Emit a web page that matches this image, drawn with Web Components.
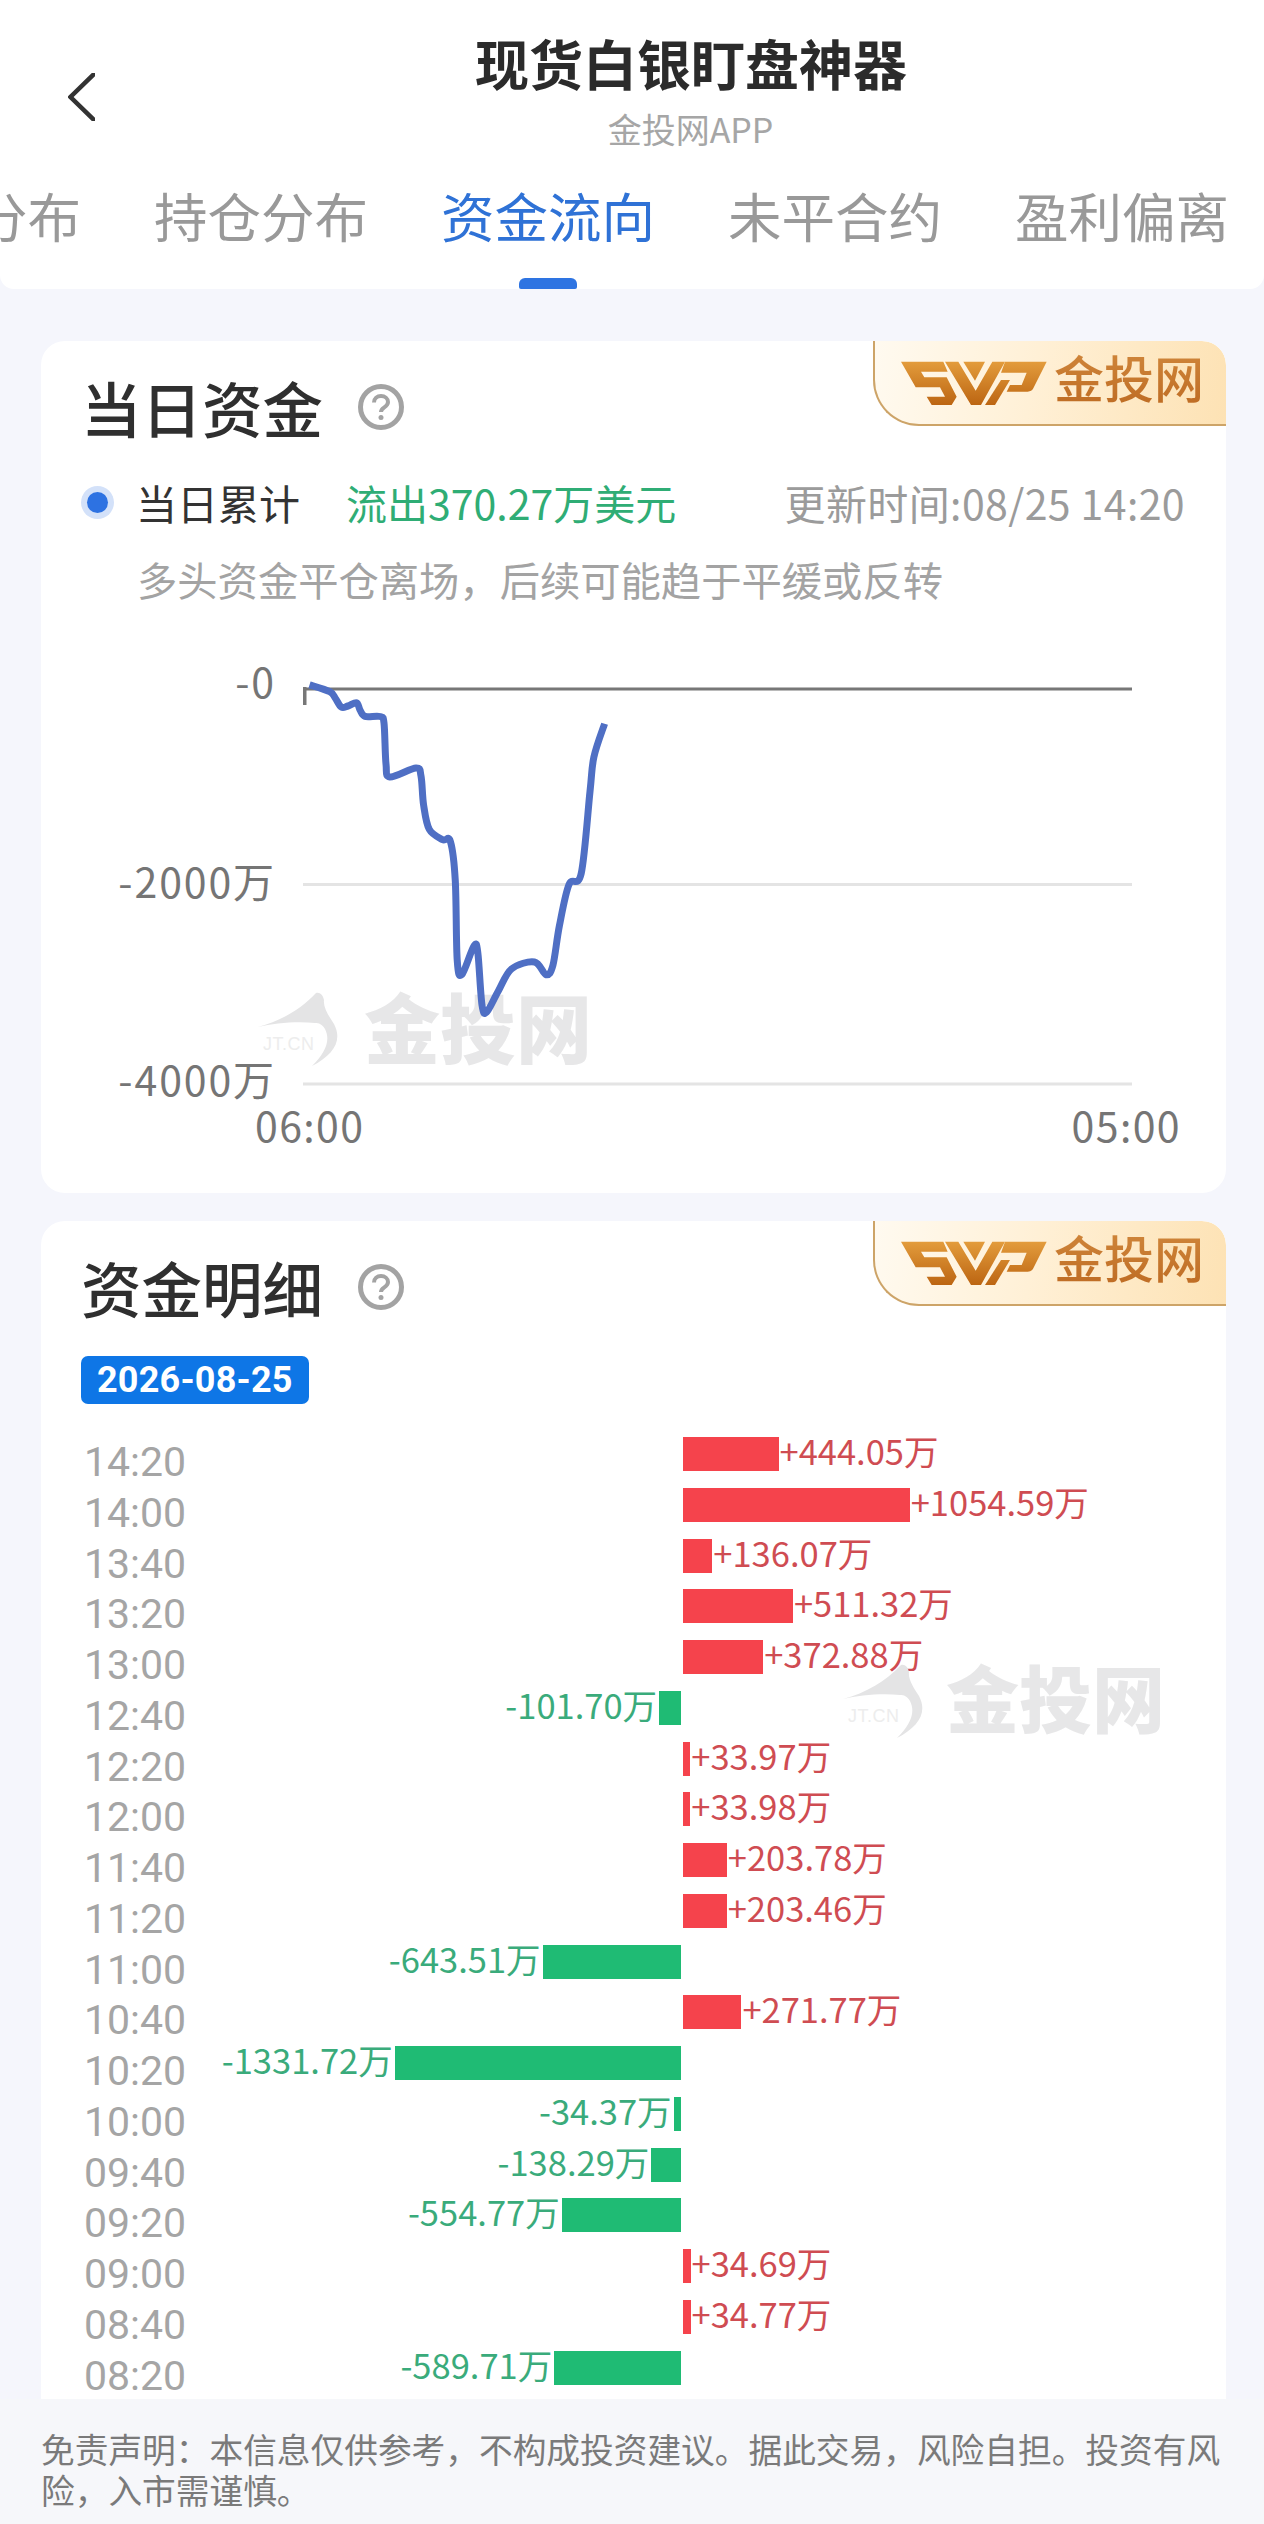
<!DOCTYPE html>
<html lang="zh-CN"><head><meta charset="utf-8"><title>现货白银盯盘神器</title>
<style>
html,body{margin:0;padding:0;background:#f5f6fc;}
body{font-family:"Noto Sans CJK SC","Noto Sans",sans-serif;width:1264px;}
</style></head><body>
<jt-app></jt-app>
<script>
const FONT='font-family:"Noto Sans CJK SC","Noto Sans",sans-serif;';
function def(name,html,setup){
  customElements.define(name,class extends HTMLElement{
    constructor(){super();const r=this.attachShadow({mode:'open'});r.innerHTML=typeof html==='function'?html(this):html;}
    connectedCallback(){if(setup&&!this._s){this._s=1;setup(this,this.shadowRoot);}}
  });
}
def('jt-header',`<style>
:host{display:block;background:#fff;height:289px;border-radius:0 0 14px 14px;overflow:hidden;${FONT}}
.top{display:flex;padding:31px 0 0 68px;height:118px;box-sizing:content-box}
svg{display:block;margin-top:42px;flex:none}
.tt{margin-left:380px;width:431px;text-align:center}
h1{margin:0;font-size:54px;line-height:64px;font-weight:700;color:#2b2b2b;white-space:nowrap}
p{margin:14px 0 0;font-size:34px;line-height:40px;color:#a6a6a6;white-space:nowrap}
nav{display:block}
</style><div class="top"><svg width="27" height="48" viewBox="0 0 27 48"><path d="M25.500 1.500 2.500 24 25.500 46.500" fill="none" stroke="#333" stroke-width="4.500" stroke-linecap="round" stroke-linejoin="miter"/></svg>
<div class="tt"><h1>现货白银盯盘神器</h1><p>金投网APP</p></div></div>
<nav><slot></slot></nav>`);
def('jt-tabs',`<style>:host{display:flex;gap:73px;margin:31px 0 0 -26px;white-space:nowrap}</style><slot></slot>`);
def('jt-tab',`<style>
:host{display:flex;flex-direction:column;align-items:center;flex:none;font-size:53.500px;line-height:70px;color:#999}
:host([active]){color:#2f72d6}
i{display:block;width:58px;height:11px;margin-top:28px;border-radius:6px 6px 2px 2px;background:transparent}
:host([active]) i{background:#2e74e2}
</style><span><slot></slot></span><i></i>`);
def('jt-badge',`<style>
:host{position:absolute;top:0;right:0;width:353px;height:85px;box-sizing:border-box;border-left:2px solid #cda468;border-bottom:2px solid #cda468;border-radius:0 24px 0 46px;background:linear-gradient(100deg,#fffaf0 0%,#fff0d6 45%,#fde2b4 100%);display:flex;align-items:flex-start;${FONT}overflow:hidden}
svg{display:block;margin:9px 0 0 20px;flex:none}
span{margin:0 0 0 -6px;font-size:50px;line-height:70px;font-weight:500;white-space:nowrap;background:linear-gradient(#d28a3e,#bd6a22);-webkit-background-clip:text;background-clip:text;color:transparent}
</style><svg width="165" height="65" viewBox="0 0 495 195">
<defs><linearGradient id="g" x1="0" y1="35" x2="0" y2="165" gradientUnits="userSpaceOnUse"><stop offset="0" stop-color="#e39c3c"/><stop offset="1" stop-color="#bc6512"/></linearGradient></defs>
<g fill="url(#g)">
<path d="M18 35H145L158 65H78L88 82H155L185 140L170 165H110L95 140H150L135 112H62Z"/>
<path d="M150 35H190L242 122L292 35H330L258 165H228Z"/>
<path d="M205 35H270L240 92Z"/>
<path d="M330 35H455L415 115Q410 125 398 125H335L345 105H380L395 68H318Z"/>
<path d="M318 90H345L300 165H270Z"/>
</g></svg><span>金投网</span>`);
def('jt-help',`<style>:host{display:block;width:46px;height:46px;flex:none}svg{display:block}</style>
<svg width="46" height="46" viewBox="0 0 46 46"><circle cx="23" cy="23" r="20.500" fill="none" stroke="#a3a3a3" stroke-width="5"/>
<path d="M16 18.500c0-4 3.200-6.500 7-6.500s7 2.500 7 6c0 3-2 4.300-4 5.600-1.800 1.200-3 2-3 4.400" fill="none" stroke="#a3a3a3" stroke-width="4"/><circle cx="23" cy="33.500" r="2.500" fill="#a3a3a3"/></svg>`);
def('jt-card',`<style>
:host{display:block;position:relative;background:#fff;margin:0 38px 0 41px;border-radius:24px;overflow:hidden;${FONT}}
:host([flat]){border-radius:24px 24px 0 0}
header{display:flex;align-items:center;padding:31px 0 3px 40px;height:70px;gap:35px}
h2{margin:0;font-size:60.500px;line-height:70px;font-weight:500;color:#2f2f2f;white-space:nowrap}
</style><jt-badge></jt-badge><header><h2></h2><jt-help></jt-help></header><slot></slot>`,
(el,r)=>{r.querySelector('h2').textContent=el.getAttribute('heading');});
def('jt-watermark',`<style>
:host{position:absolute;display:flex;align-items:flex-start;gap:var(--gap,24px);${FONT}pointer-events:none}
.b{position:relative;width:84px;height:80px;flex:none}
svg{display:block}
.j{position:absolute;left:6px;top:43px;font:18px/20px "Liberation Sans",sans-serif;letter-spacing:.5px;color:#ededed;white-space:nowrap}
.t{font-size:var(--fs,73px);line-height:var(--fs,73px);font-weight:900;margin-top:-4px;color:#e7e7e8;white-space:nowrap}
</style><div class="b"><svg width="84" height="80" viewBox="0 0 84 80"><path d="M1 36C24 30 44 18 59 2C63 1 66 4 67 9C66 17 72 25 77 33C86 50 76 64 55 75C68 62 74 50 68 38C65 33 62 32 58 32C40 30 18 32 1 36Z" fill="#e4e4e5"/></svg><span class="j">JT.CN</span></div><div class="t">金投网</div>`);
def('jt-legend',`<style>
:host{display:block;padding:18px 41px 0 40px;${FONT}}
.r{display:flex;align-items:center;height:78px;font-size:41px;white-space:nowrap}
.d{width:33px;height:33px;border-radius:50%;background:#d3e1f9;display:flex;align-items:center;justify-content:center;flex:none}
.d i{display:block;width:21px;height:21px;border-radius:50%;background:#2d72e2}
.l{margin-left:22px;color:#333}
.v{margin-left:46px;color:#2fad75}
.u{margin-left:auto;color:#9b9b9b;letter-spacing:.4px}
.n{padding-left:56px;margin-top:-1px;font-size:40.300px;color:#a3a3a3;line-height:78px;white-space:nowrap}
</style><div class="r"><span class="d"><i></i></span><span class="l">当日累计</span><span class="v">流出370.27万美元</span><span class="u">更新时间:08/25 14:20</span></div><div class="n">多头资金平仓离场，后续可能趋于平缓或反转</div>`);
const PTS=[[309.5,684.8],[329.8,691.7],[335.5,698.5],[341.3,707],[348,706],[356.6,702.7],[360,710],[365,716.4],[380,716.5],[384,723],[386,764],[389.9,777],[415.9,768],[421,776],[423.6,805],[429.3,829.4],[442.7,839.7],[450.4,841.4],[455.3,881],[457.2,960],[461.8,974.7],[474,945.8],[477.9,953.4],[482,1005],[486.7,1012],[498.2,991.2],[511.6,968.9],[534.5,962],[546,974.7],[552.9,965.4],[559.4,925.8],[569,884.5],[581.2,873.5],[590,791.5],[593.9,757],[604.6,723.7]];
function smooth(p){let d=`M${p[0][0]} ${p[0][1]}`;for(let i=0;i<p.length-1;i++){const a=p[i-1]||p[i],b=p[i],c=p[i+1],e=p[i+2]||c,k=6;
 d+=`C${(b[0]+(c[0]-a[0])/k).toFixed(1)} ${(b[1]+(c[1]-a[1])/k).toFixed(1)} ${(c[0]-(e[0]-b[0])/k).toFixed(1)} ${(c[1]-(e[1]-b[1])/k).toFixed(1)} ${c[0]} ${c[1]}`;}return d;}
def('jt-flow-chart',`<style>
:host{display:block;position:relative;margin-top:22px;height:553px;${FONT}}
svg{display:block;position:relative}
text{font-size:41px;fill:#757575;letter-spacing:1.400px}
.y{letter-spacing:1.900px}
</style><svg width="1185" height="553" viewBox="41 640 1185 553">
<rect x="303" y="687.500" width="829" height="3" fill="#777"/><rect x="303" y="687" width="3.500" height="18" fill="#777"/>
<rect x="303" y="883" width="829" height="3" fill="#e4e4e4"/><rect x="303" y="1082.500" width="829" height="3" fill="#e4e4e4"/>
<text class="y" x="276" y="698" text-anchor="end">-0</text><text class="y" x="276" y="898" text-anchor="end">-2000万</text><text class="y" x="276" y="1096" text-anchor="end">-4000万</text>
<text x="255" y="1142">06:00</text><text x="1181" y="1142" text-anchor="end">05:00</text>
<path id="l" fill="none" stroke="#4f6fc4" stroke-width="7" stroke-linejoin="round"/></svg>`,
(el,r)=>{r.getElementById('l').setAttribute('d',smooth(PTS));});
def('jt-row',`<style>
:host{display:grid;grid-template-columns:110px 486px 1fr;column-gap:0;height:50.750px;font-size:34.500px;white-space:nowrap}
.t{font:41px/44px Roboto,"Noto Sans",sans-serif;margin:3px 0 0 -1px;height:44px;color:#a5a5a5}
.n,.p{display:flex;align-items:flex-start;height:34px}
.n{justify-content:flex-end;color:#3aab7b}
.p{color:#cf4c52;margin-left:2px}
b{display:block;height:34px;flex:none}
.n b{background:#1fbb74;margin-left:2px}.p b{background:#f5434c;margin-right:1px}
span.v{line-height:34px;margin-top:-4px}
</style><div class="t"></div><div class="n"></div><div class="p"></div>`,
(el,r)=>{const v=parseFloat(el.getAttribute('v'));r.querySelector('.t').textContent=el.getAttribute('t');
 const s=document.createElement('span');s.className='v';s.textContent=(v>0?'+':'-')+Math.abs(v).toFixed(2)+'万';
 const b=document.createElement('b');b.style.width=(Math.abs(v)*0.215).toFixed(1)+'px';
 if(v>0)r.querySelector('.p').append(b,s);else r.querySelector('.n').append(s,b);});
def('jt-detail',`<style>
:host{display:block;padding:31px 0 0 40px;${FONT}}
.c{display:inline-block;vertical-align:top;height:48px;padding:0 16px;background:#0e76e6;color:#fff;border-radius:7px;font:700 36px/48px Roboto,"Noto Sans",sans-serif;letter-spacing:.2px}
.l{margin:33px 0 0 4px}
</style><div class="c">2026-08-25</div><div class="l"><slot></slot></div>`);
def('jt-disclaimer',`<style>
:host{display:block;background:#f6f7fa;height:125px;box-sizing:border-box;padding:29px 38px 0 41px;font-size:33.700px;line-height:41px;color:#7a7a7a;${FONT}}
</style><slot></slot>`);
const ROWS=[['14:20',444.05],['14:00',1054.59],['13:40',136.07],['13:20',511.32],['13:00',372.88],['12:40',-101.70],['12:20',33.97],['12:00',33.98],['11:40',203.78],['11:20',203.46],['11:00',-643.51],['10:40',271.77],['10:20',-1331.72],['10:00',-34.37],['09:40',-138.29],['09:20',-554.77],['09:00',34.69],['08:40',34.77],['08:20',-589.71]];
def('jt-app',`<style>
:host{display:block;width:1264px;height:2524px;overflow:hidden;background:#f5f6fc;${FONT}}
.g1{margin-top:52px;height:852px}
.g2{margin-top:28px;height:1178px}
</style>
<jt-header><jt-tabs><jt-tab>分布</jt-tab><jt-tab>持仓分布</jt-tab><jt-tab active>资金流向</jt-tab><jt-tab>未平合约</jt-tab><jt-tab>盈利偏离</jt-tab></jt-tabs></jt-header>
<jt-card class="g1" heading="当日资金"><jt-watermark style="left:216px;top:650px;--fs:76px;--gap:23px"></jt-watermark><jt-legend></jt-legend><jt-flow-chart></jt-flow-chart></jt-card>
<jt-card class="g2" flat heading="资金明细"><jt-watermark style="left:801px;top:442px;--fs:73px;--gap:20px"></jt-watermark><jt-detail id="d"></jt-detail></jt-card>
<jt-disclaimer>免责声明：本信息仅供参考，不构成投资建议。据此交易，风险自担。投资有风险，入市需谨慎。</jt-disclaimer>`,
(el,r)=>{const d=r.getElementById('d');ROWS.forEach(([t,v])=>{const e=document.createElement('jt-row');e.setAttribute('t',t);e.setAttribute('v',v);d.append(e);});});
</script></body></html>
